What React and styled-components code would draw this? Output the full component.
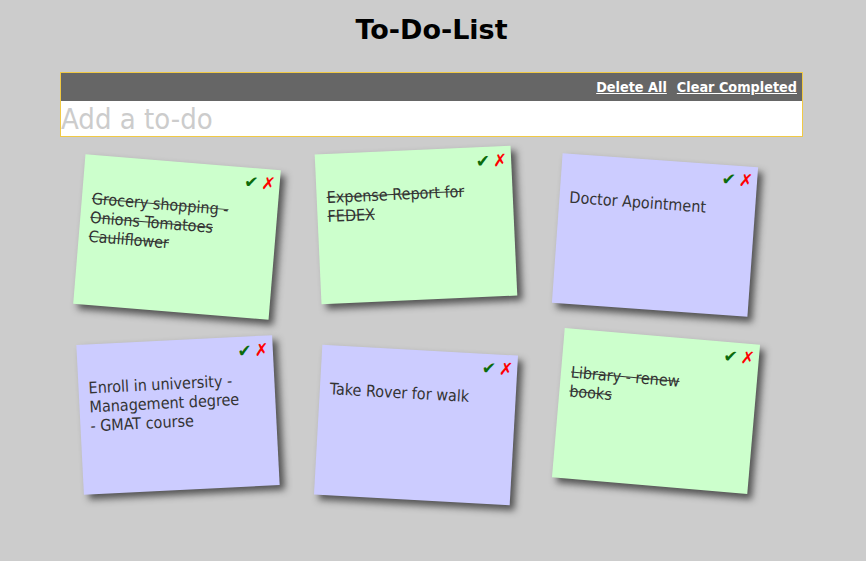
import React from 'react'
import styled, { createGlobalStyle } from 'styled-components'

const GlobalStyle = createGlobalStyle`
  html, body {
    margin: 0;
    padding: 0;
    background: #cccccc;
  }
  body {
    font-family: "DejaVu Sans Condensed", "DejaVu Sans", "Liberation Sans", sans-serif;
    font-stretch: condensed;
  }
`

const Page = styled.div`
  width: 743px;
  margin-left: 60px;
  padding-bottom: 40px;
`

const Title = styled.h1`
  margin: 14px 0 27px;
  font-family: "DejaVu Sans", sans-serif;
  font-stretch: normal;
  font-size: 27px;
  font-weight: bold;
  color: #000;
  text-align: center;
`

const Panel = styled.div`
  border: 1px solid #f0c945;
`

const Toolbar = styled.div`
  height: 28px;
  background: #666666;
  display: flex;
  justify-content: flex-end;
  align-items: center;
  gap: 10px;
  padding-right: 5px;
`

const ToolLink = styled.a`
  color: #fff;
  font-size: 14.3px;
  font-weight: bold;
  text-decoration: underline;
  cursor: pointer;
`

const AddInput = styled.input`
  display: block;
  width: 100%;
  box-sizing: border-box;
  height: 35px;
  border: none;
  outline: none;
  padding: 0;
  font-family: inherit;
  font-stretch: condensed;
  font-size: 29px;
  background: #fff;
  color: #333;
  &::placeholder {
    color: #cccccc;
  }
`

const Board = styled.div`
  display: grid;
  grid-template-columns: repeat(3, 196px);
  column-gap: 44px;
  row-gap: 35px;
  padding: 20px 0 0 18px;
`

const Note = styled.div`
  width: 196px;
  height: 150px;
  box-sizing: border-box;
  padding: 5px 4px 0 10px;
  background: ${p => (p.$tone === 'green' ? '#ccffcc' : '#ccccff')};
  box-shadow: 5px 5px 7px rgba(33, 33, 33, 0.7);
  transform: translate(${p => p.$dx}px, ${p => p.$dy}px) rotate(${p => p.$tilt}deg);
`

const Actions = styled.div`
  display: flex;
  justify-content: flex-end;
  gap: 3px;
  height: 19px;
  font-size: 17px;
  font-weight: bold;
  line-height: 19px;
  font-family: "DejaVu Sans", sans-serif;
  font-stretch: normal;
`

const Done = styled.span`
  color: #0b6b0b;
  cursor: pointer;
`

const Remove = styled.span`
  color: #ff0000;
  cursor: pointer;
`

const NoteText = styled.p`
  margin: 10px 0 0;
  width: 150px;
  font-size: 16px;
  color: #333333;
  text-decoration: ${p => (p.$done ? 'line-through' : 'none')};
`

const notes = [
  { text: 'Grocery shopping - Onions Tomatoes Cauliflower', tone: 'green', done: true, tilt: 4.7, dx: 1, dy: 5 },
  { text: 'Expense Report for FEDEX', tone: 'green', done: true, tilt: -2.6, dx: 0, dy: -7 },
  { text: 'Doctor Apointment', tone: 'blue', done: false, tilt: 4.1, dx: -1, dy: 3 },
  { text: 'Enroll in university - Management degree - GMAT course', tone: 'blue', done: false, tilt: -2.9, dx: 2, dy: -2 },
  { text: 'Take Rover for walk', tone: 'blue', done: false, tilt: 3.2, dx: 0, dy: 8 },
  { text: 'Library - renew books', tone: 'green', done: true, tilt: 4.9, dx: 0, dy: -6 },
]

export default function App() {
  return (
    <>
      <GlobalStyle />
      <Page>
        <Title>To-Do-List</Title>
        <Panel>
          <Toolbar>
            <ToolLink>Delete All</ToolLink>
            <ToolLink>Clear Completed</ToolLink>
          </Toolbar>
          <AddInput placeholder="Add a to-do" />
        </Panel>
        <Board>
          {notes.map((n, i) => (
            <Note key={i} $tone={n.tone} $tilt={n.tilt} $dx={n.dx} $dy={n.dy}>
              <Actions>
                <Done>✔</Done>
                <Remove>✗</Remove>
              </Actions>
              <NoteText $done={n.done}>{n.text}</NoteText>
            </Note>
          ))}
        </Board>
      </Page>
    </>
  )
}
